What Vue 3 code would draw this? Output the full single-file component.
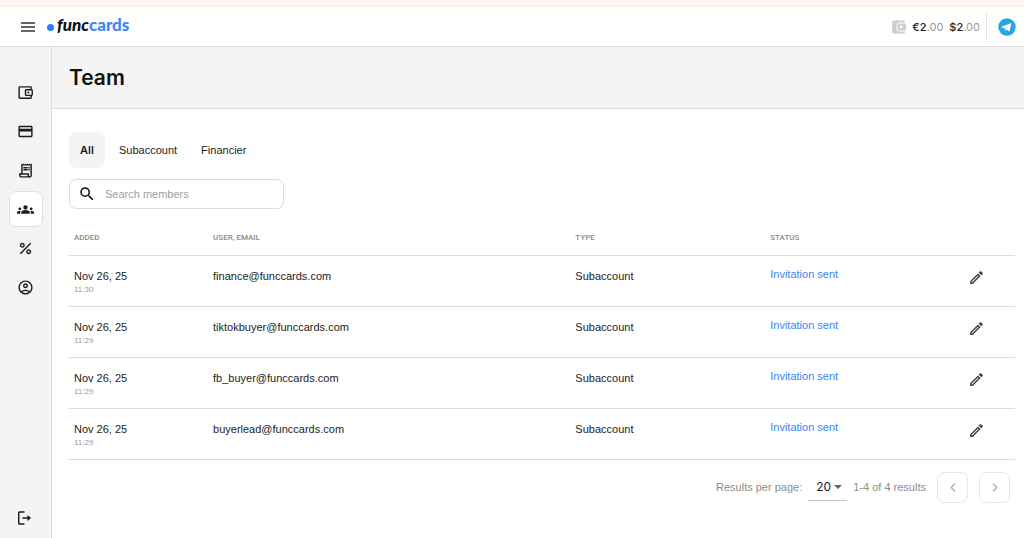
<script setup>
import { ref } from 'vue'

const tabs = ['All', 'Subaccount', 'Financier']
const activeTab = ref('All')
const search = ref('')
const perPage = ref('20')

const members = [
  { date: 'Nov 26, 25', time: '11:30', email: 'finance@funccards.com' },
  { date: 'Nov 26, 25', time: '11:29', email: 'tiktokbuyer@funccards.com' },
  { date: 'Nov 26, 25', time: '11:29', email: 'fb_buyer@funccards.com' },
  { date: 'Nov 26, 25', time: '11:29', email: 'buyerlead@funccards.com' },
]

const nav = [
  {
    label: 'Wallet',
    path: 'M21 7.300V5a2 2 0 0 0-2-2H4a2 2 0 0 0-2 2v14a2 2 0 0 0 2 2h15a2 2 0 0 0 2-2v-2.300a2 2 0 0 0 1.500-2V9.300a2 2 0 0 0-1.500-2zM20.500 9v6H13V9zM4 19V5h15v2h-6a2 2 0 0 0-2 2v6a2 2 0 0 0 2 2h6v2zM16 10.500a1.500 1.500 0 1 0 0 3 1.500 1.500 0 0 0 0-3z',
  },
  {
    label: 'Cards',
    path: 'M20 4H4c-1.110 0-1.990.890-1.990 2L2 18c0 1.110.890 2 2 2h16c1.110 0 2-.890 2-2V6c0-1.110-.890-2-2-2zm0 14H4v-6h16v6zm0-10H4V6h16v2z',
  },
  {
    label: 'Transactions',
    path: 'M19.500 3.500 18 2l-1.500 1.500L15 2l-1.500 1.500L12 2l-1.500 1.500L9 2 7.500 3.500 6 2v14H3v3c0 1.660 1.340 3 3 3h12c1.660 0 3-1.340 3-3V2l-1.500 1.500zM15 20H6c-.550 0-1-.450-1-1v-1h10v2zm4-1c0 .550-.450 1-1 1s-1-.450-1-1v-3H8V5h11v14zM9 7h6v2H9zM16 7h2v2h-2zM9 10h6v2H9zM16 10h2v2h-2z',
  },
  {
    label: 'Team',
    active: true,
    path: 'M12 12.750c1.630 0 3.070.390 4.240.900 1.080.480 1.760 1.560 1.760 2.730V18H6v-1.610c0-1.180.680-2.260 1.760-2.730 1.170-.520 2.610-.910 4.240-.910zM4 13c1.100 0 2-.900 2-2s-.900-2-2-2-2 .900-2 2 .900 2 2 2zm1.130 1.100c-.370-.060-.740-.100-1.130-.100-.990 0-1.930.210-2.780.580C.480 14.900 0 15.620 0 16.430V18h4.500v-1.610c0-.830.230-1.610.630-2.290zM20 13c1.100 0 2-.900 2-2s-.900-2-2-2-2 .900-2 2 .900 2 2 2zm4 3.430c0-.810-.480-1.530-1.220-1.850-.850-.370-1.790-.580-2.780-.580-.390 0-.760.040-1.130.100.400.680.630 1.460.630 2.290V18H24v-1.570zM12 6c1.660 0 3 1.340 3 3s-1.340 3-3 3-3-1.340-3-3 1.340-3 3-3z',
  },
  {
    label: 'Rates',
    path: 'M7.500 11C9.430 11 11 9.430 11 7.500S9.430 4 7.500 4 4 5.570 4 7.500 5.570 11 7.500 11zm0-5C8.330 6 9 6.670 9 7.500S8.330 9 7.500 9 6 8.330 6 7.500 6.670 6 7.500 6zM4 18.590 18.590 4 20 5.410 5.410 20zM16.500 13c-1.930 0-3.500 1.570-3.500 3.500s1.570 3.500 3.500 3.500 3.500-1.570 3.500-3.500-1.570-3.500-3.500-3.500zm0 5c-.830 0-1.500-.670-1.500-1.500s.670-1.500 1.500-1.500 1.500.670 1.500 1.500-.670 1.500-1.500 1.500z',
  },
  {
    label: 'Profile',
    path: 'M12 2C6.480 2 2 6.480 2 12s4.480 10 10 10 10-4.480 10-10S17.520 2 12 2zM7.350 18.500C8.660 17.560 10.260 17 12 17s3.340.560 4.650 1.500C15.340 19.440 13.740 20 12 20s-3.340-.560-4.650-1.500zm10.790-1.380C16.450 15.800 14.320 15 12 15s-4.450.800-6.140 2.120C4.700 15.730 4 13.950 4 12c0-4.420 3.580-8 8-8s8 3.580 8 8c0 1.950-.700 3.730-1.860 5.120zM12 6c-1.930 0-3.500 1.570-3.500 3.500S10.070 13 12 13s3.500-1.570 3.500-3.500S13.930 6 12 6zm0 5c-.830 0-1.500-.670-1.500-1.500S11.170 8 12 8s1.500.670 1.500 1.500S12.830 11 12 11z',
  },
]
</script>

<template>
  <div class="app">
    <div class="notice"></div>
    <header class="topbar">
      <button class="plain" aria-label="Menu">
        <svg width="14" height="10" viewBox="0 0 14 10"><path d="M0 1h14M0 5h14M0 9h14" stroke="#333" stroke-width="1.3" /></svg>
      </button>
      <a class="logo" href="#" aria-label="funccards">
        <span class="dot"></span><span class="func">func</span><span class="cards">cards</span>
      </a>
      <div class="balances">
        <svg width="14" height="14" viewBox="0 0 14 14">
          <path fill="#cdcdcd" d="M2 .500h9.500A1.500 1.500 0 0 1 13 2v.500H7A2.500 2.500 0 0 0 4.500 5v4A2.500 2.500 0 0 0 7 11.500h6v.500a1.500 1.500 0 0 1-1.500 1.500H2A1.800 1.800 0 0 1 .200 11.700V2.300A1.800 1.800 0 0 1 2 .500z" />
          <rect x="5.500" y="3.500" width="8.500" height="7" rx="1.300" fill="#cdcdcd" />
          <circle cx="9" cy="7" r="1.400" fill="#fff" />
        </svg>
        <span class="money"><b>€2</b>.00</span>
        <span class="money"><b>$2</b>.00</span>
      </div>
      <a class="telegram" href="#" aria-label="Telegram">
        <svg width="18" height="18" viewBox="0 0 18 18">
          <circle cx="9" cy="9" r="8.700" fill="#28a5de" />
          <path fill="#fff" d="m3.700 8.700 8.700-3.500c.500-.200.900.100.700.800l-1.400 6.800c-.100.500-.400.600-.900.400L8.600 11.600l-1.200 1c-.300.200-.400.100-.400-.200l-.100-1.800-3.100-1c-.600-.200-.600-.600-.100-.900z" />
          <path d="m7 10.600 4.200-3.500-3.400 4.100-.600 1.300z" fill="#b9dcef" />
        </svg>
      </a>
    </header>

    <div class="body">
      <nav class="sidebar" aria-label="Main">
        <a v-for="n in nav" :key="n.label" href="#" class="nav-item" :class="{ active: n.active }" :aria-label="n.label">
          <svg width="17" height="17" viewBox="0 0 24 24"><path :d="n.path" fill="currentColor" fill-rule="evenodd" /></svg>
        </a>
        <a href="#" class="nav-item logout" aria-label="Log out">
          <svg width="15" height="14" viewBox="0 0 15 14" fill="none" stroke="#1c1c1c" stroke-width="1.500">
            <path d="M6.500 1H1.700a1 1 0 0 0-1 1v10a1 1 0 0 0 1 1h4.800M4.500 7h7" />
            <path d="M9.500 4v6L13 7z" fill="#1c1c1c" stroke="none" />
          </svg>
        </a>
      </nav>

      <main class="main">
        <div class="title"><h1>Team</h1></div>
        <section class="content">
          <div class="tabs">
            <button v-for="t in tabs" :key="t" class="tab" :class="{ on: t === activeTab }" @click="activeTab = t">{{ t }}</button>
          </div>

          <label class="search">
            <svg width="18" height="18" viewBox="0 0 24 24"><path fill="#111" d="M15.500 14h-.790l-.280-.270A6.471 6.471 0 0 0 16 9.500 6.500 6.500 0 1 0 9.500 16c1.610 0 3.090-.590 4.230-1.570l.270.280v.790l5 4.990L20.490 19l-4.990-5zm-6 0C7.010 14 5 11.990 5 9.500S7.010 5 9.500 5 14 7.010 14 9.500 11.990 14 9.500 14z" /></svg>
            <input v-model="search" type="text" placeholder="Search members" aria-label="Search members" />
          </label>

          <table class="table">
            <colgroup>
              <col class="c-added" /><col class="c-user" /><col class="c-type" /><col class="c-status" /><col />
            </colgroup>
            <thead>
              <tr>
                <th>ADDED</th>
                <th>USER, EMAIL</th>
                <th>TYPE</th>
                <th>STATUS</th>
                <th></th>
              </tr>
            </thead>
            <tbody>
              <tr v-for="m in members" :key="m.email">
                <td>{{ m.date }}<span class="time">{{ m.time }}</span></td>
                <td>{{ m.email }}</td>
                <td>Subaccount</td>
                <td class="status">Invitation sent</td>
                <td class="actions">
                  <button class="plain" :aria-label="'Edit ' + m.email">
                    <svg width="17" height="17" viewBox="0 0 24 24"><path fill="#404040" d="m14.060 9.020.920.920L5.920 19H5v-.920l9.060-9.060M17.660 3c-.250 0-.510.100-.700.290l-1.830 1.830 3.750 3.750 1.830-1.830a.996.996 0 0 0 0-1.410l-2.340-2.340c-.200-.200-.450-.290-.710-.290zm-3.600 3.190L3 17.250V21h3.750L17.810 9.940l-3.750-3.750z" /></svg>
                  </button>
                </td>
              </tr>
            </tbody>
          </table>

          <div class="pager">
            <label for="per-page">Results per page:</label>
            <div class="select">
              <select id="per-page" v-model="perPage">
                <option>20</option>
                <option>50</option>
              </select>
              <svg width="8" height="4" viewBox="0 0 8 4"><path d="M0 0h8L4 4z" fill="#666" /></svg>
            </div>
            <span class="count">1-4 of 4 results</span>
            <button class="page" aria-label="Previous page">
              <svg width="6" height="9" viewBox="0 0 6 9"><path d="M5 .700 1.200 4.500 5 8.300" fill="none" stroke="#aaa" stroke-width="1.300" /></svg>
            </button>
            <button class="page" aria-label="Next page">
              <svg width="6" height="9" viewBox="0 0 6 9"><path d="M1 .700 4.800 4.500 1 8.300" fill="none" stroke="#aaa" stroke-width="1.300" /></svg>
            </button>
          </div>
        </section>
      </main>
    </div>
  </div>
</template>

<style>
body {
  background: #fff;
}
</style>

<style scoped>
.app,
.app * {
  box-sizing: border-box;
}
.app {
  min-height: 100vh;
  display: flex;
  flex-direction: column;
  font: 11px/14px "Liberation Sans", Arial, sans-serif;
  color: #1c1c1c;
}
svg {
  display: block;
  flex: none;
}
button,
input,
select {
  font: inherit;
  color: inherit;
}
.plain {
  padding: 0;
  border: 0;
  background: none;
}
.notice {
  height: 7px;
  background: #fff4f2;
  border-bottom: 1px solid #fdeceb;
}
.topbar {
  height: 40px;
  display: flex;
  align-items: center;
  padding: 0 8px 0 21px;
  border-bottom: 1px solid #dcdcdc;
}
.logo {
  display: flex;
  align-items: center;
  margin-left: 12px;
  padding-bottom: 4px;
  font: 900 17px/20px Lato, sans-serif;
  text-decoration: none;
}
.dot {
  width: 7px;
  height: 7px;
  margin: 5px 3px 0 0;
  border-radius: 50%;
  background: #2f7bff;
}
.func {
  color: #111;
  font-style: italic;
}
.cards {
  color: #3d86f8;
}
.balances {
  display: flex;
  align-items: center;
  gap: 6px;
  margin-left: auto;
  padding-right: 6px;
  height: 28px;
  border-right: 1px solid #e4e4e4;
}
.money {
  font-family: Inter, sans-serif;
  color: #999;
}
.money b {
  color: #222;
  font-weight: 500;
}
.telegram {
  margin-left: 11px;
}
.body {
  flex: 1;
  display: flex;
}
.sidebar {
  flex: none;
  width: 52px;
  display: flex;
  flex-direction: column;
  align-items: center;
  gap: 3px;
  padding: 27px 0 2px;
  background: #f4f4f4;
  border-right: 1px solid #dedede;
}
.nav-item {
  width: 34px;
  height: 36px;
  display: flex;
  align-items: center;
  justify-content: center;
  border: 1px solid transparent;
  border-radius: 7px;
  color: #1c1c1c;
}
.nav-item.active {
  background: #fff;
  border-color: #e0e0e0;
}
.logout {
  margin-top: auto;
}
.main {
  flex: 1;
  min-width: 0;
}
.title {
  padding: 17px 17px 16px;
  background: #f4f4f4;
  border-bottom: 1px solid #dcdcdc;
}
h1 {
  margin: 0;
  font: 600 21px/28px Inter, sans-serif;
  color: #111;
}
.content {
  padding: 23px 9px 0 17px;
}
.tabs {
  display: flex;
  gap: 4px;
}
.tab {
  min-width: 36px;
  height: 36px;
  padding: 0 10px;
  border: 0;
  border-radius: 7px;
  background: none;
}
.tab.on {
  background: #f4f4f4;
  font-family: Inter, sans-serif;
  font-weight: 600;
}
.search {
  width: 215px;
  height: 30px;
  margin-top: 11px;
  padding: 0 8px;
  display: flex;
  align-items: center;
  gap: 9px;
  border: 1px solid #dcdcdc;
  border-radius: 7px;
}
.search input {
  flex: 1;
  min-width: 0;
  padding: 0;
  border: 0;
  outline: 0;
  background: none;
}
.search input::placeholder {
  color: #a0a0a0;
}
.table {
  width: 100%;
  margin-top: 11px;
  table-layout: fixed;
  border-collapse: collapse;
}
.c-added {
  width: 14.700%;
}
.c-user {
  width: 38.300%;
}
.c-type {
  width: 20.600%;
}
.c-status {
  width: 20.600%;
}
th {
  height: 35px;
  padding: 2px 5px 0;
  text-align: left;
  font: 500 8px/12px Roboto, sans-serif;
  color: #8a8a8a;
  border-bottom: 1px solid #dcdcdc;
}
td {
  height: 51px;
  padding: 13px 5px 0;
  vertical-align: top;
  border-bottom: 1px solid #dcdcdc;
}
.time {
  display: block;
  font-size: 8px;
  line-height: 14px;
  color: #999;
}
td.status {
  padding-top: 11px;
  color: #3d84f5;
}
td.actions {
  padding-left: 8px;
}
.pager {
  display: flex;
  justify-content: flex-end;
  align-items: center;
  margin-top: 12px;
  padding-right: 5px;
  color: #8c8c8c;
}
.select {
  display: flex;
  align-items: center;
  width: 39px;
  height: 28px;
  margin: 0 6px;
  padding: 0 5px 0 8px;
  border-bottom: 1px solid #c4c4c4;
  color: #222;
}
.select select {
  flex: 1;
  min-width: 0;
  padding: 0;
  border: 0;
  outline: 0;
  appearance: none;
  background: none;
  font: 12px/14px Inter, sans-serif;
}
.page {
  width: 31px;
  height: 31px;
  margin-left: 11px;
  padding: 0;
  display: flex;
  align-items: center;
  justify-content: center;
  border: 1px solid #e6e6e6;
  border-radius: 7px;
  background: #fff;
}
</style>
